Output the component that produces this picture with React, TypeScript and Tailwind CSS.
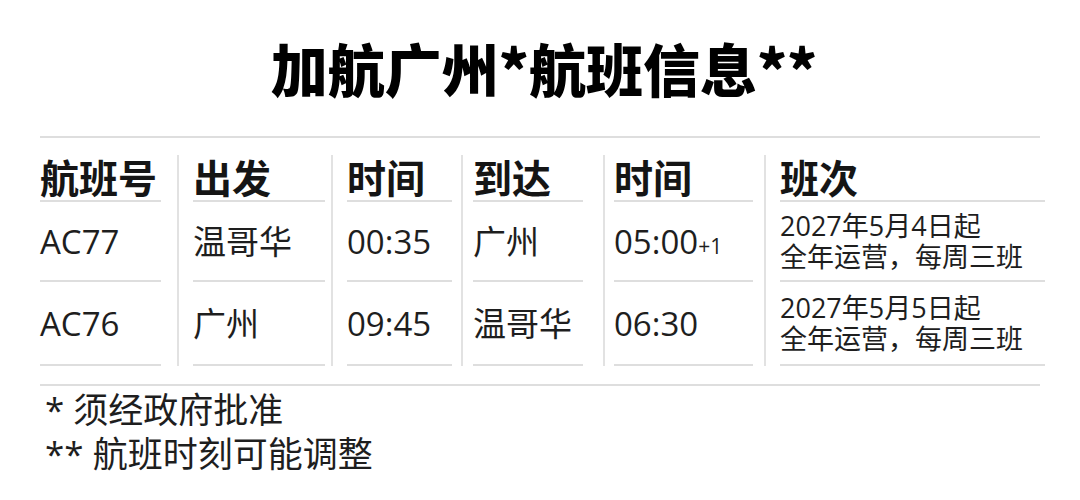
import React from "react";

type Col = {
  head: string;
  rows: React.ReactNode[];
  wrap: string; // wrapper padding / border
  inner: string; // content width
};

const cols: Col[] = [
  { head: "航班号", rows: ["AC77", "AC76"], wrap: "w-[137px] pr-[16px]", inner: "w-[121px]" },
  { head: "出发", rows: ["温哥华", "广州"], wrap: "w-[154px] border-l-2 pl-[14px] pr-[6px]", inner: "w-[132px]" },
  { head: "时间", rows: ["00:35", "09:45"], wrap: "w-[130px] border-l-2 pl-[14px] pr-[9px]", inner: "w-[105px]" },
  { head: "到达", rows: ["广州", "温哥华"], wrap: "w-[142px] border-l-2 pl-[10px] pr-[20px]", inner: "w-[110px]" },
  {
    head: "时间",
    rows: [
      <span key="a">
        05:00<span className="text-[21px]">+1</span>
      </span>,
      "06:30",
    ],
    wrap: "w-[161px] border-l-2 pl-[9px] pr-[11px]",
    inner: "w-[139px]",
  },
  {
    head: "班次",
    rows: [
      <div key="a" className="text-[27px] leading-[31px]">
        <div>2027年5月4日起</div>
        <div>全年运营，每周三班</div>
      </div>,
      <div key="b" className="text-[27px] leading-[31px]">
        <div>2027年5月5日起</div>
        <div>全年运营，每周三班</div>
      </div>,
    ],
    wrap: "w-[281px] border-l-2 pl-[14px]",
    inner: "w-[265px]",
  },
];

export default function App() {
  return (
    <div
      className="w-[1080px] h-[500px] bg-white text-[#1e1e1e] overflow-hidden"
      style={{ fontFamily: '"Open Sans", "Noto Sans CJK SC", sans-serif' }}
    >
      <h1
        className="pt-[38px] pl-[8px] text-center text-[57px] leading-[58px] font-black text-black"
        style={{ fontFamily: '"Noto Sans CJK SC", sans-serif' }}
      >
        加航广州*航班信息**
      </h1>

      <div className="mx-[40px] mt-[40px] border-t-2 border-[#dedede]" />

      {/* table */}
      <div className="mx-[40px] mt-[17px] flex">
        {cols.map((c, i) => (
          <div key={i} className={`${c.wrap} border-[#e2e2e2] flex flex-col`}>
            <div className={`${c.inner} h-[47px] flex items-center border-b-2 border-[#dedede] text-[39px] font-bold leading-none text-[#151515]`}>
              {c.head}
            </div>
            <div className={`${c.inner} h-[80px] flex items-center border-b-2 border-[#dedede] text-[33px] leading-none`}>
              {c.rows[0]}
            </div>
            <div className={`${c.inner} h-[84px] flex items-center border-b-2 border-[#dedede] text-[33px] leading-none`}>
              {c.rows[1]}
            </div>
          </div>
        ))}
      </div>

      <div className="mx-[40px] mt-[18px] border-t-2 border-[#dedede]" />

      <div className="mx-[45px] mt-[2px] text-[35px] leading-[44px]">
        <div>* 须经政府批准</div>
        <div>** 航班时刻可能调整</div>
      </div>
    </div>
  );
}
